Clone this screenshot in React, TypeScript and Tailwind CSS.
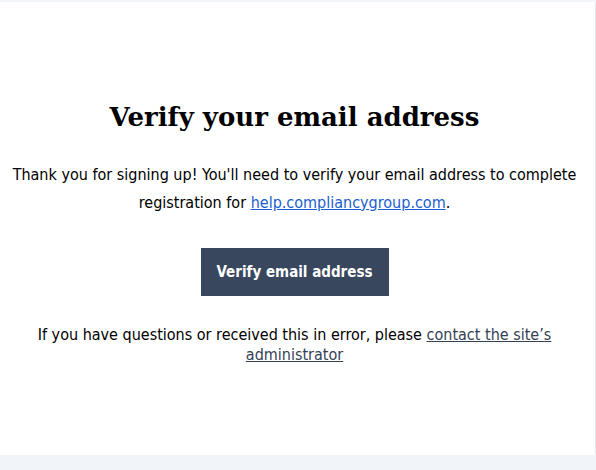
export default function App() {
  return (
    <div className="min-h-screen bg-[#f1f5f9] pt-[2px]" style={{ fontFamily: '"DejaVu Sans Condensed", "DejaVu Sans", sans-serif' }}>
      <div className="h-[453px] bg-white border-r border-[#e5e7eb] flex flex-col items-center pt-[97px] pr-[6px] text-center text-black">
        <h1 className="text-[26px] leading-[36px] font-bold" style={{ fontFamily: '"DejaVu Serif", Georgia, serif' }}>
          Verify your email address
        </h1>
        <p className="mt-[26px] text-[16px] leading-[28px] px-3">
          Thank you for signing up! You'll need to verify your email address to complete registration for{' '}
          <a href="#" className="text-[#1b5fd1] underline">help.compliancygroup.com</a>.
        </p>
        <a href="#" className="mt-[31px] w-[188px] h-[48px] flex items-center justify-center bg-[#38475e] text-white font-bold text-[15px]">
          Verify email address
        </a>
        <p className="mt-[29px] text-[16px] leading-[20px] px-9">
          If you have questions or received this in error, please{' '}
          <a href="#" className="text-[#334155] underline">contact the site’s administrator</a>
        </p>
      </div>
    </div>
  );
}
